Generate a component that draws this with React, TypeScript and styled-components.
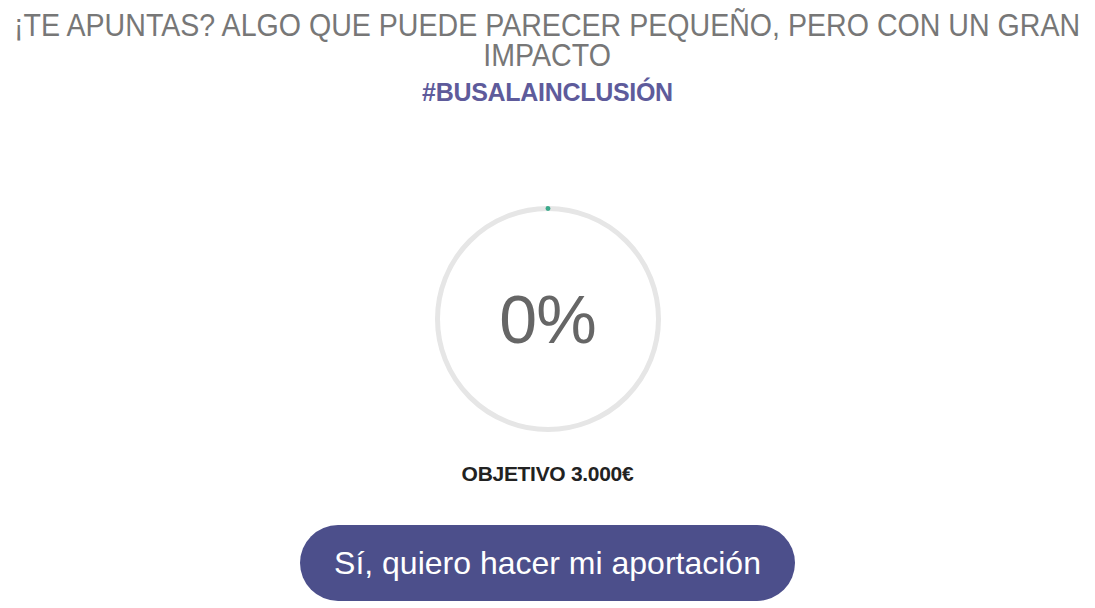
import React from 'react';
import styled, { createGlobalStyle } from 'styled-components';

const GlobalStyle = createGlobalStyle`
  html, body {
    margin: 0;
    padding: 0;
    background: #fff;
  }
  body {
    font-family: "Liberation Sans", Arial, sans-serif;
    overflow: hidden;
  }
`;

const NARROW = 0.893;

const Page = styled.div`
  display: flex;
  flex-direction: column;
  align-items: center;
  overflow: hidden;
  padding-top: 10px;
`;

const Headline = styled.h1`
  width: ${1095 / NARROW}px;
  flex-shrink: 0;
  margin: 0;
  font-size: 32px;
  line-height: 30px;
  font-weight: 400;
  color: #777;
  text-align: center;
  transform: scaleX(${NARROW});
  transform-origin: center;
`;

const Hashtag = styled.h2`
  margin: 7px 0 0;
  font-size: 25px;
  line-height: 30px;
  font-weight: 700;
  letter-spacing: -0.3px;
  color: #5e5b9b;
`;

const Gauge = styled.div`
  position: relative;
  width: 226px;
  height: 226px;
  margin-top: 99px;
`;

const GaugeValue = styled.div`
  position: absolute;
  inset: 0;
  display: flex;
  align-items: center;
  justify-content: center;
  font-size: 68px;
  color: #666;
  letter-spacing: -1px;
`;

const Goal = styled.div`
  margin-top: 30px;
  font-size: 21px;
  line-height: 24px;
  font-weight: 700;
  letter-spacing: -0.3px;
  color: #222;
`;

const DonateButton = styled.button`
  margin-top: 39px;
  width: 495px;
  height: 76px;
  border: none;
  border-radius: 38px;
  background: #4c4f8b;
  color: #fff;
  font-family: "Liberation Sans", Arial, sans-serif;
  font-size: 32px;
  cursor: pointer;
`;

interface ProgressRingProps {
  percent: number
}

const ProgressRing: React.FC<ProgressRingProps> = ({ percent }) => {
  const r = 110.5;
  const c = 2 * Math.PI * r;
  return (
    <Gauge>
      <svg width="226" height="226" viewBox="0 0 226 226">
        <circle cx="113" cy="113" r={r} fill="none" stroke="#e6e6e6" strokeWidth="5"/>
        <circle
          cx="113"
          cy="113"
          r={r}
          fill="none"
          stroke="#3aa98a"
          strokeWidth="5"
          strokeLinecap="round"
          strokeDasharray={`${(percent / 100) * c + 0.01} ${c}`}
          transform="rotate(-90 113 113)"
        />
      </svg>
      <GaugeValue>{percent}%</GaugeValue>
    </Gauge>
  );
};

const App: React.FC = () => (
  <Page>
    <GlobalStyle/>
    <Headline>¡TE APUNTAS? ALGO QUE PUEDE PARECER PEQUEÑO, PERO CON UN GRAN IMPACTO</Headline>
    <Hashtag>#BUSALAINCLUSIÓN</Hashtag>
    <ProgressRing percent={0}/>
    <Goal>OBJETIVO 3.000€</Goal>
    <DonateButton>Sí, quiero hacer mi aportación</DonateButton>
  </Page>
);

export default App;
